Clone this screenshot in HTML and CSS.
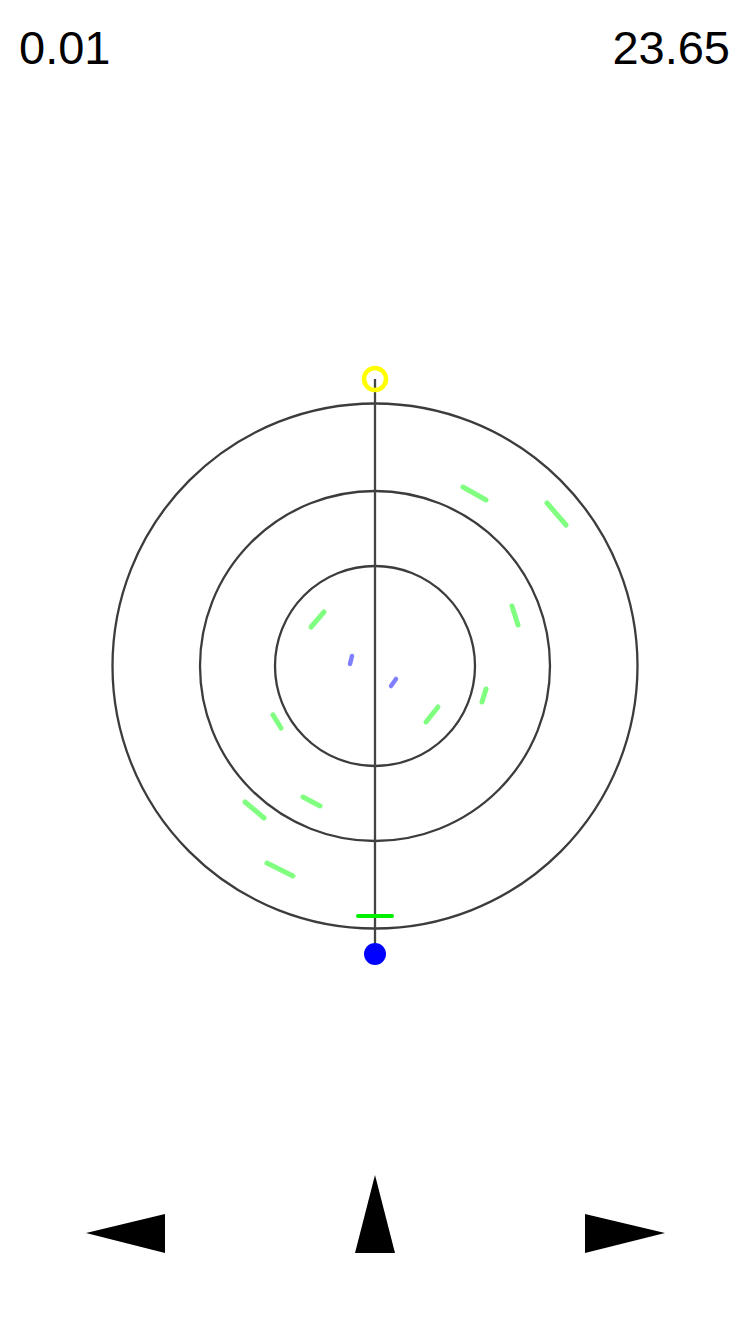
FILE: index.html
```html
<!DOCTYPE html>
<html lang="en">
  <head>
    <meta charset="UTF-8" />
    <meta name="viewport" content="width=device-width, initial-scale=1.0" />
    <title>Radar</title>
    <link rel="stylesheet" href="styles.css">
  </head>
  <body>
    <div class="screen">
      <header class="readout">
        <span class="value">0.01</span>
        <span class="value">23.65</span>
      </header>

      <svg class="radar" viewBox="0 360 750 610" width="750" height="610">
        <!-- rings -->
        <circle class="ring" cx="375" cy="666" r="262.5" />
        <circle class="ring" cx="375" cy="666" r="175" />
        <circle class="ring" cx="375" cy="666" r="100" />
        <line class="axis" x1="375" y1="379" x2="375" y2="954" />

        <!-- far targets -->
        <g class="blip">
          <line x1="463" y1="487" x2="486" y2="500" />
          <line x1="547" y1="503" x2="566" y2="525" />
          <line x1="512" y1="606" x2="518" y2="625" />
          <line x1="324" y1="612" x2="311" y2="627" />
          <line x1="486" y1="689" x2="482" y2="702" />
          <line x1="438" y1="707" x2="426" y2="722" />
          <line x1="273" y1="715" x2="281" y2="728" />
          <line x1="245" y1="802" x2="264" y2="818" />
          <line x1="303" y1="797" x2="320" y2="806" />
          <line x1="267" y1="863" x2="293" y2="876" />
        </g>
        <g class="blip near">
          <line x1="352" y1="656" x2="350" y2="664" />
          <line x1="396" y1="679" x2="391" y2="686" />
        </g>

        <line class="marker" x1="358" y1="916" x2="392" y2="916" />
        <circle class="target" cx="375" cy="379" r="11" />
        <circle class="ship" cx="375" cy="954" r="11" />
      </svg>

      <nav class="controls">
        <button class="control" type="button" aria-label="left">
          <svg viewBox="0 0 80 80" width="80" height="80"><polygon points="1,58 80,39 80,78" /></svg>
        </button>
        <button class="control" type="button" aria-label="forward">
          <svg viewBox="0 0 80 80" width="80" height="80"><polygon points="40,0 20,78 60,78" /></svg>
        </button>
        <button class="control" type="button" aria-label="right">
          <svg viewBox="0 0 80 80" width="80" height="80"><polygon points="0,39 80,58 0,78" /></svg>
        </button>
      </nav>
    </div>
  </body>
</html>
```

FILE: styles.css
```css
body {
  margin: 0;
  background: #fff;
  font-family: Helvetica, Arial, "Liberation Sans", sans-serif;
  color: #000;
}
.screen {
  width: 750px;
  height: 1334px;
  overflow: hidden;
}
.readout {
  display: flex;
  justify-content: space-between;
  padding: 24px 20px 0 19px;
  font-size: 47px;
  line-height: 1;
}
.radar {
  display: block;
  margin-top: 289px;
}
.ring {
  fill: none;
  stroke: #3c3c3c;
  stroke-width: 2.3;
}
.axis {
  stroke: #444;
  stroke-width: 2.3;
}
.blip line {
  stroke: #80ff80;
  stroke-width: 5;
  stroke-linecap: round;
}
.blip.near line {
  stroke: #8080ff;
  stroke-width: 4.5;
}
.marker {
  stroke: #00f000;
  stroke-width: 4;
  stroke-linecap: round;
}
.target {
  fill: none;
  stroke: #ffff00;
  stroke-width: 4.5;
}
.ship {
  fill: #0000ff;
}
.controls {
  display: grid;
  grid-template-columns: repeat(3, 250px);
  margin-top: 205px;
}
.control {
  justify-self: center;
  width: 80px;
  height: 80px;
  padding: 0;
  border: 0;
  background: none;
}
.control svg {
  display: block;
  fill: #000;
}
```
